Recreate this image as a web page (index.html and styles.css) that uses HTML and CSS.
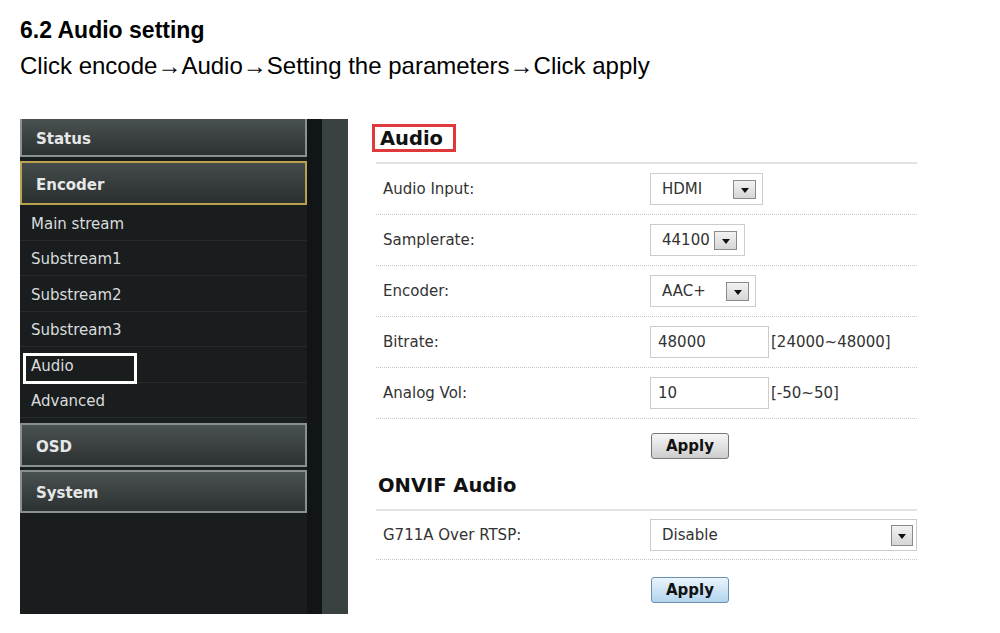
FILE: index.html
```html
<!DOCTYPE html>
<html lang="en">
<head>
    <meta charset="UTF-8">
    <meta name="viewport" content="width=device-width, initial-scale=1.0">
    <title>6.2 Audio setting</title>
    <link rel="stylesheet" href="styles.css">
</head>
<body>
    <div class="doc-head">
        <h1>6.2 Audio setting</h1>
        <p>Click encode<span class="arr">→</span>Audio<span class="arr">→</span>Setting the parameters<span class="arr">→</span>Click apply</p>
    </div>

    <div class="device">
        <div class="sidebar">
            <div class="menu">
                <div class="menu-btn status">Status</div>
                <div class="menu-btn active">Encoder</div>
                <div class="sub-item">Main stream</div>
                <div class="sub-item">Substream1</div>
                <div class="sub-item">Substream2</div>
                <div class="sub-item">Substream3</div>
                <div class="sub-item current">Audio<span class="mark-white"></span></div>
                <div class="sub-item">Advanced</div>
                <div class="menu-btn osd">OSD</div>
                <div class="menu-btn system">System</div>
            </div>
            <div class="sidebar-edge"></div>
            <div class="sidebar-rail"></div>
        </div>

        <div class="content">
            <h2 class="section-title marked">Audio</h2>
            <div class="form">
                <div class="row">
                    <label>Audio Input:</label>
                    <div class="select w-hdmi"><span>HDMI</span><i class="arrow"></i></div>
                </div>
                <div class="row">
                    <label>Samplerate:</label>
                    <div class="select w-rate"><span>44100</span><i class="arrow"></i></div>
                </div>
                <div class="row">
                    <label>Encoder:</label>
                    <div class="select w-enc"><span>AAC+</span><i class="arrow"></i></div>
                </div>
                <div class="row">
                    <label>Bitrate:</label>
                    <div class="text-input">48000</div>
                    <span class="range">[24000~48000]</span>
                </div>
                <div class="row">
                    <label>Analog Vol:</label>
                    <div class="text-input">10</div>
                    <span class="range">[-50~50]</span>
                </div>
            </div>
            <div class="actions">
                <button class="btn">Apply</button>
            </div>

            <h2 class="section-title onvif">ONVIF Audio</h2>
            <div class="form">
                <div class="row short">
                    <label>G711A Over RTSP:</label>
                    <div class="select w-full"><span>Disable</span><i class="arrow"></i></div>
                </div>
            </div>
            <div class="actions last">
                <button class="btn blue">Apply</button>
            </div>
        </div>
    </div>
</body>
</html>
```

FILE: styles.css
```css
body {
    margin: 0;
    background-color: #ffffff;
    font-family: "Liberation Sans", Arial, sans-serif;
    color: #000000;
}

/* document heading */
.doc-head {
    padding: 16px 0 0 20px;
}

.doc-head h1 {
    margin: 0;
    font-size: 23px;
    line-height: 28px;
    font-weight: bold;
}

.doc-head p {
    margin: 8px 0 0 0;
    height: 28px;
    font-size: 24px;
    line-height: 28px;
}

.arr {
    font-family: "Liberation Serif", serif;
    line-height: 1;
}

/* web ui */
.device {
    display: flex;
    margin-top: 39px;
    padding-left: 20px;
    font-family: "DejaVu Sans", Verdana, sans-serif;
}

.sidebar {
    display: flex;
    height: 495px;
}

.menu {
    width: 287px;
    background-color: #1a1d1e;
}

.sidebar-edge {
    width: 15px;
    background-color: #111515;
}

.sidebar-rail {
    width: 26px;
    background-color: #3a4241;
}

.menu-btn {
    box-sizing: border-box;
    height: 44px;
    padding: 3px 0 0 14px;
    display: flex;
    align-items: center;
    font-size: 15px;
    font-weight: bold;
    color: #e6e8e8;
    background: linear-gradient(#4a5151, #2c3131);
    border: 2px solid #899090;
}

.menu-btn.status {
    height: 38px;
    border-top: none;
}

.menu-btn.active {
    margin-top: 4px;
    border-color: #b9a24f;
    background: linear-gradient(#454b4b, #2a2f2f);
}

.menu-btn.osd {
    margin-top: 5px;
}

.menu-btn.system {
    margin-top: 3px;
    height: 43px;
}

.sub-item {
    position: relative;
    height: 35.5px;
    box-sizing: border-box;
    padding: 3px 0 0 11px;
    display: flex;
    align-items: center;
    font-size: 15px;
    color: #d9dcdc;
    border-bottom: 1px solid #272b2c;
}

.sub-item:last-of-type {
    border-bottom: none;
}

.mark-white {
    position: absolute;
    left: 3px;
    top: 6px;
    width: 114px;
    height: 31px;
    box-sizing: border-box;
    border: 3px solid #ffffff;
}

.content {
    width: 541px;
    margin-left: 28px;
    padding-top: 5px;
    color: #333333;
}

.section-title {
    margin: 0;
    font-size: 19.5px;
    font-weight: bold;
    color: #111111;
    line-height: 21px;
}

.section-title.marked {
    display: inline-block;
    margin-left: -4px;
    padding: 1px 10px 0 5px;
    height: 21px;
    border: 3px solid #e0393b;
}

.section-title.onvif {
    margin-top: 15px;
    padding-left: 2px;
    line-height: 24px;
}

.form {
    margin-top: 10px;
    border-top: 2px solid #e3e3e3;
}

.section-title.onvif + .form {
    margin-top: 11px;
}

.row {
    display: flex;
    align-items: center;
    height: 50px;
    border-bottom: 1px dotted #c9c9c9;
    font-size: 15px;
}

.row.short {
    height: 48px;
}

.row label {
    width: 267px;
    padding-left: 7px;
}

.select {
    box-sizing: border-box;
    height: 32px;
    display: flex;
    align-items: center;
    justify-content: space-between;
    padding: 0 6px 0 11px;
    border: 1px solid #cccccc;
    background-color: #ffffff;
}

.w-hdmi { width: 113px; }
.w-rate { width: 95px; padding-right: 7px; }
.w-enc { width: 106px; }
.w-full { width: 267px; height: 32px; padding-right: 3px; }

.arrow {
    box-sizing: border-box;
    width: 23px;
    height: 19px;
    border: 1px solid #8a8a8a;
    background: linear-gradient(#f2f2f2, #d6d6d6);
    display: flex;
    align-items: center;
    justify-content: center;
}

.arrow::after {
    content: "";
    margin-top: 3px;
    border-left: 4px solid transparent;
    border-right: 4px solid transparent;
    border-top: 5px solid #111111;
}

.w-full .arrow {
    width: 22px;
    height: 21px;
}

.text-input {
    box-sizing: border-box;
    width: 119px;
    height: 32px;
    padding-left: 7px;
    display: flex;
    align-items: center;
    border: 1px solid #cccccc;
}

.range {
    margin-left: 2px;
}

.actions {
    padding: 14px 0 0 275px;
}

.actions.last {
    padding-top: 17px;
}

.btn {
    width: 78px;
    height: 26px;
    padding: 0;
    font-family: "DejaVu Sans", Verdana, sans-serif;
    font-size: 15px;
    font-weight: bold;
    color: #111111;
    background: linear-gradient(#f6f6f6, #cdcdcd);
    border: 1px solid #777777;
    border-radius: 3px;
}

.btn.blue {
    background: linear-gradient(#eaf4fc, #b2d4ee);
    border-color: #6b8fb1;
}
```
